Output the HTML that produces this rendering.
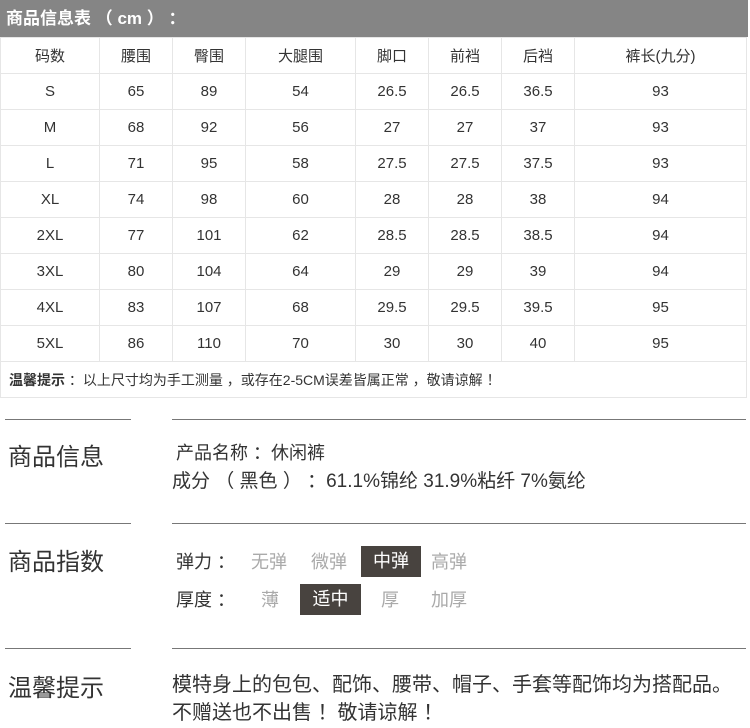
<!DOCTYPE html><html><head><meta charset="utf-8"><style>
body{margin:0;width:750px;height:728px;background:#fff;font-family:"Liberation Sans","Noto Sans CJK SC",sans-serif;color:#333;position:relative;overflow:hidden}
.a{position:absolute;white-space:pre}
.bar{left:0;top:0;width:748px;height:37px;background:#858585;color:#fff;font-weight:bold;font-size:17px;line-height:37px;padding-left:6px;box-sizing:border-box}
table{position:absolute;left:0;top:37px;border-collapse:collapse;width:747px;font-size:15px;color:#333}
td{border:1px solid #e6e6e6;height:35px;text-align:center;padding:0}
td.n{text-align:left;padding-left:8px;font-size:14px;white-space:pre}
.ln{position:absolute;height:1px;background:#777}
.h{font-size:24px;color:#333}
.t{font-size:18px;color:#333}
.g{color:#aaa}
.k{position:absolute;background:#48433f;color:#fff;font-size:18px;text-align:center;line-height:31px;height:31px}
</style></head><body>
<div class="a bar">商品信息表 （ cm ） ：</div>
<table>
<colgroup><col style="width:99px"><col style="width:73px"><col style="width:73px"><col style="width:110px"><col style="width:73px"><col style="width:73px"><col style="width:73px"><col></colgroup>
<tr><td>码数</td><td>腰围</td><td>臀围</td><td>大腿围</td><td>脚口</td><td>前裆</td><td>后裆</td><td>裤长(九分)</td></tr>
<tr><td>S</td><td>65</td><td>89</td><td>54</td><td>26.5</td><td>26.5</td><td>36.5</td><td>93</td></tr>
<tr><td>M</td><td>68</td><td>92</td><td>56</td><td>27</td><td>27</td><td>37</td><td>93</td></tr>
<tr><td>L</td><td>71</td><td>95</td><td>58</td><td>27.5</td><td>27.5</td><td>37.5</td><td>93</td></tr>
<tr><td>XL</td><td>74</td><td>98</td><td>60</td><td>28</td><td>28</td><td>38</td><td>94</td></tr>
<tr><td>2XL</td><td>77</td><td>101</td><td>62</td><td>28.5</td><td>28.5</td><td>38.5</td><td>94</td></tr>
<tr><td>3XL</td><td>80</td><td>104</td><td>64</td><td>29</td><td>29</td><td>39</td><td>94</td></tr>
<tr><td>4XL</td><td>83</td><td>107</td><td>68</td><td>29.5</td><td>29.5</td><td>39.5</td><td>95</td></tr>
<tr><td>5XL</td><td>86</td><td>110</td><td>70</td><td>30</td><td>30</td><td>40</td><td>95</td></tr>
<tr><td colspan="8" class="n"><b>温馨提示</b> ：以上尺寸均为手工测量 ，或存在2-5CM误差皆属正常 ，敬请谅解 ！</td></tr>
</table>
<div class="ln" style="left:5px;top:419px;width:126px"></div><div class="ln" style="left:172px;top:419px;width:574px"></div>
<div class="a h" style="left:8px;top:437px">商品信息</div>
<div class="a t" style="left:176px;top:439px">产品名称 ：休闲裤</div>
<div class="a t" style="left:172px;top:466px;font-size:19px">成分 （ 黑色 ） ：61.1%锦纶 31.9%粘纤 7%氨纶</div>
<div class="ln" style="left:5px;top:523px;width:126px"></div><div class="ln" style="left:172px;top:523px;width:574px"></div>
<div class="a h" style="left:8px;top:542px">商品指数</div>
<div class="a t" style="left:176px;top:548px">弹力 ：</div>
<div class="a t g" style="left:251px;top:548px">无弹</div>
<div class="a t g" style="left:311px;top:548px">微弹</div>
<div class="k" style="left:361px;top:546px;width:60px">中弹</div>
<div class="a t g" style="left:431px;top:548px">高弹</div>
<div class="a t" style="left:176px;top:586px">厚度 ：</div>
<div class="a t g" style="left:261px;top:586px">薄</div>
<div class="k" style="left:300px;top:584px;width:61px">适中</div>
<div class="a t g" style="left:381px;top:586px">厚</div>
<div class="a t g" style="left:431px;top:586px">加厚</div>
<div class="ln" style="left:5px;top:648px;width:126px"></div><div class="ln" style="left:172px;top:648px;width:574px"></div>
<div class="a h" style="left:8px;top:668px">温馨提示</div>
<div class="a t" style="left:172px;top:668px;font-size:20px">模特身上的包包、配饰、腰带、帽子、手套等配饰均为搭配品。</div>
<div class="a t" style="left:172px;top:696px;font-size:20px">不赠送也不出售 ！敬请谅解 ！</div>
</body></html>
